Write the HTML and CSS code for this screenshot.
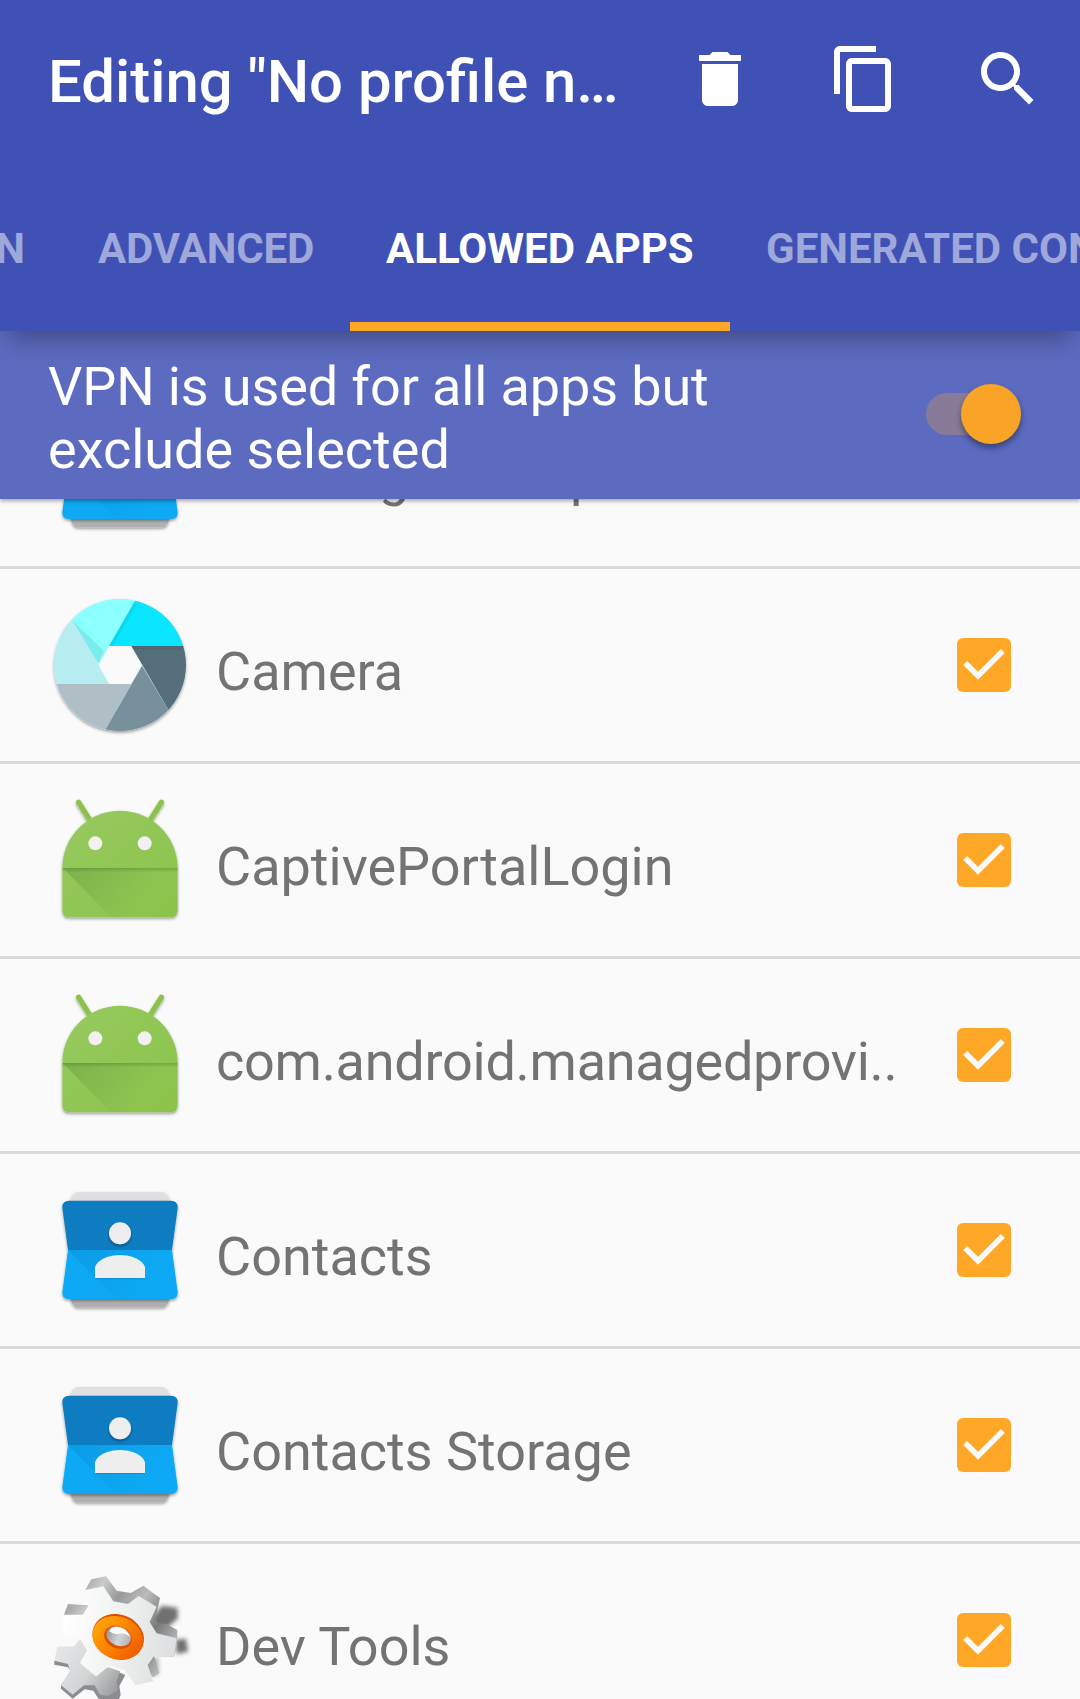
FILE: index.html
```html
<!DOCTYPE html>
<html lang="en">
<head>
<meta charset="utf-8">
<title>Allowed apps</title>
<link rel="stylesheet" href="styles.css">
</head>
<body>
<svg class="defs" width="0" height="0" aria-hidden="true">
  <defs>
    <filter id="shadow" x="-10%" y="-10%" width="120%" height="125%">
      <feDropShadow dx="0" dy="5" stdDeviation="4" flood-color="#000" flood-opacity=".38"/>
    </filter>
    <filter id="soft" x="-50%" y="-50%" width="200%" height="200%"><feGaussianBlur stdDeviation="7"/></filter>
    <filter id="fine" x="-5%" y="-5%" width="110%" height="110%"><feGaussianBlur stdDeviation="1.6"/></filter>
    <linearGradient id="foldGreen" gradientUnits="userSpaceOnUse" x1="90" y1="264" x2="270" y2="410">
      <stop offset="0" stop-color="#33691e" stop-opacity=".22"/><stop offset="1" stop-color="#33691e" stop-opacity="0"/>
    </linearGradient>
    <linearGradient id="foldBlue" gradientUnits="userSpaceOnUse" x1="100" y1="240" x2="310" y2="370">
      <stop offset="0" stop-color="#01579b" stop-opacity=".16"/><stop offset="1" stop-color="#01579b" stop-opacity="0"/>
    </linearGradient>
    <linearGradient id="topShade" x1="0" y1="0" x2="0" y2="1">
      <stop offset="0" stop-color="#1b3a00" stop-opacity=".2"/><stop offset="1" stop-color="#1b3a00" stop-opacity="0"/>
    </linearGradient>
    <linearGradient id="bodyGreen" x1="0" y1="0" x2="1" y2="1">
      <stop offset="0" stop-color="#97ca60"/><stop offset="1" stop-color="#8bc34a"/>
    </linearGradient>
    <linearGradient id="gearFace" gradientUnits="userSpaceOnUse" x1="70" y1="200" x2="410" y2="260">
      <stop offset="0" stop-color="#fff"/><stop offset=".45" stop-color="#f1f2f2"/><stop offset="1" stop-color="#dcdedf"/>
    </linearGradient>
    <linearGradient id="gearEdge" gradientUnits="userSpaceOnUse" x1="80" y1="60" x2="400" y2="260">
      <stop offset="0" stop-color="#85878a"/><stop offset=".26" stop-color="#c9cbcc"/><stop offset=".42" stop-color="#97999b"/><stop offset=".6" stop-color="#b9bbbd"/><stop offset=".8" stop-color="#77797b"/><stop offset="1" stop-color="#b5b7b9"/>
    </linearGradient>
    <linearGradient id="gearSmall" gradientUnits="userSpaceOnUse" x1="60" y1="270" x2="240" y2="400">
      <stop offset="0" stop-color="#e4e5e6"/><stop offset=".5" stop-color="#d2d4d5"/><stop offset="1" stop-color="#939597"/>
    </linearGradient>
    <linearGradient id="ring" x1="0" y1="0" x2="1" y2=".3">
      <stop offset="0" stop-color="#ffab0a"/><stop offset=".5" stop-color="#ff8a00"/><stop offset="1" stop-color="#f26200"/>
    </linearGradient>
    <linearGradient id="hole" gradientUnits="userSpaceOnUse" x1="198" y1="236" x2="272" y2="236">
      <stop offset="0" stop-color="#96989a"/><stop offset=".55" stop-color="#d4d5d6"/><stop offset="1" stop-color="#b0b2b4"/>
    </linearGradient>
    <clipPath id="lens"><circle cx="240" cy="255" r="198"/></clipPath>

    <symbol id="icon-camera" viewBox="24 39 432 432">
      <g filter="url(#shadow)">
        <path fill-rule="evenodd" fill="#b2ebf2" d="M240 57a198 198 0 1 1 0 396a198 198 0 1 1 0-396zM207 198L175 255L207 312H273L306 255L274 198z"/>
      </g>
      <path fill="#fafafa" d="M207 198L175 255L207 312H273L306 255L274 198z"/>
      <g clip-path="url(#lens)">
        <path fill="#b7ecf1" d="M97 121L207 312H30V80z"/>
        <path fill="#8cffff" d="M97 121L60 40H298L175 252z"/>
        <path fill="#006064" fill-opacity=".12" d="M97 121L191 212L175 250z"/>
        <path fill="#0ae6ff" d="M285 62L207 198H450V40H298z"/>
        <path fill="#546e7a" d="M274 198H450V420H403L386 391z"/>
        <path fill="#78909c" d="M306 258L386 391L403 460H188L197 447z"/>
        <path fill="#b0bec5" d="M30 312H274L197 447L190 470H30z"/>
        <path fill="#000" fill-opacity=".06" d="M274 198H430V208H280zM285 62L207 198H219L290 74z"/>
      </g>
    </symbol>

    <symbol id="icon-android" viewBox="24 24 432 432">
      <g filter="url(#shadow)">
        <path d="M116 67L150 121M364 67L330 121" stroke="#8bc34a" stroke-width="16" stroke-linecap="round"/>
        <path fill="url(#bodyGreen)" d="M67 264C67 168 145 92 240 92S413 168 413 264V391Q413 412 392 412H88Q67 412 67 391z"/>
      </g>
      <path fill="url(#foldGreen)" d="M68 264H413V391Q413 412 392 412H214z"/>
      <rect x="67" y="264" width="346" height="14" fill="url(#topShade)"/>
      <circle cx="166" cy="190" r="21" fill="#f1f1f1"/><circle cx="314" cy="190" r="21" fill="#f1f1f1"/>
    </symbol>

    <symbol id="icon-contacts" viewBox="24 24 432 432">
      <g filter="url(#shadow)">
        <path fill="#e0e0e0" d="M92 100V92Q96 66 116 66H364Q384 66 388 92V240H92z"/>
        <path fill="#b0b0b0" d="M92 240H388V384Q384 412 364 412H116Q96 412 92 384z"/>
      </g>
      <g filter="url(#shadow)">
        <path fill="#0b7bc1" d="M84 240L67 113Q66 92 88 92H392Q414 92 413 113L396 240z"/>
        <path fill="#08a9f4" d="M84 240L67 367Q66 387 88 387H392Q414 387 413 367L396 240z"/>
      </g>
      <path fill="url(#foldBlue)" d="M84 240H396L413 367Q414 387 392 387H230z"/>
      <g filter="url(#shadow)"><circle cx="240" cy="190" r="33" fill="#eee"/></g>
      <path fill="#eee" d="M165 324V292C172 268 207 255 240 255S308 268 315 292V324z"/>
      <path fill="#006ba8" fill-opacity=".3" d="M165 324H315V328H169z"/>
    </symbol>

    <symbol id="icon-gears" viewBox="24 24 432 432">
      <g filter="url(#soft)" fill="#3c3c3c" fill-opacity=".72">
        <path d="M335 175L365 137L412 143L414 175L380 205L345 200z"/>
        <path d="M405 240L438 236L444 275L410 282z"/>
        <path d="M322 300L355 292V345L335 345z" fill-opacity=".4"/>
      </g>
      <g filter="url(#fine)">
        <path fill="#8b8d90" d="M43 302V314L84 322L92 332L63 376V386L98 416L134 388L160 392L178 420L180 456H220L242 405L238 378L256 345L210 325z"/>
        <path fill="url(#gearSmall)" d="M52 260L102 259L121 236L142 272L121 306L168 350L206 322L240 334L229 366L234 391L205 408L180 404L164 376L132 376L98 404L63 376L90 332L84 312L43 302z"/>
        <path fill="url(#gearEdge)" d="M136 90L154 58L198 49L230 92L272 99L310 77L360 114L352 150L345 190L378 192L412 210L411 256L402 290L342 288L358 338L340 352L310 330L140 200L72 164L84 132L146 136L155 110z"/>
        <path fill="url(#gearFace)" d="M136 90L190 79L220 124L264 132L296 108L350 140L329 186L350 220L410 235L402 290L342 288L323 315L340 364L286 376L254 330L208 319L168 350L121 310L142 270L118 235L68 220V164L128 164L145 138z"/>
        <g transform="rotate(22 234 232)">
          <ellipse cx="234" cy="230" rx="79" ry="66" fill="#df4c05"/>
          <ellipse cx="234" cy="234" rx="78" ry="64" fill="url(#ring)"/>
          <ellipse cx="234" cy="232" rx="43" ry="33" fill="#db5200"/>
        </g>
        <ellipse cx="236" cy="229" rx="38" ry="28" transform="rotate(22 236 229)" fill="url(#hole)"/>
        <path fill="#fff" d="M208 214Q212 200 232 200Q258 203 270 230Q252 216 236 221Q220 224 208 214z"/>
      </g>
    </symbol>

    <symbol id="check" viewBox="0 0 54 54">
      <rect width="54" height="54" rx="6" fill="#ffa726"/>
      <path d="M8.2 25L21 37.8L45.8 13" fill="none" stroke="#fafafa" stroke-width="5.6"/>
    </symbol>
  </defs>
</svg>

<div class="screen">
  <header class="app-bar">
    <div class="toolbar">
      <h1 class="title">Editing "No profile n…</h1>
      <div class="actions">
        <svg class="action" viewBox="0 0 24 24"><path d="M6 19c0 1.1.9 2 2 2h8c1.1 0 2-.9 2-2V7H6v12zM19 4h-3.5l-1-1h-5l-1 1H5v2h14V4z"/></svg>
        <svg class="action" viewBox="0 0 24 24"><path d="M16 1H4c-1.1 0-2 .9-2 2v14h2V3h12V1zm3 4H8c-1.1 0-2 .9-2 2v14c0 1.1.9 2 2 2h11c1.1 0 2-.9 2-2V7c0-1.1-.9-2-2-2zm0 16H8V7h11v14z"/></svg>
        <svg class="action" viewBox="0 0 24 24"><path d="M15.5 14h-.79l-.28-.27C15.41 12.59 16 11.11 16 9.5 16 5.91 13.09 3 9.5 3S3 5.91 3 9.5 5.91 16 9.5 16c1.61 0 3.09-.59 4.23-1.57l.27.28v.79l5 4.99L20.49 19l-4.99-5zm-6 0C7.01 14 5 11.99 5 9.5S7.01 5 9.5 5 14 7.01 14 9.5 11.99 14 9.5 14z"/></svg>
      </div>
    </div>
    <nav class="tabs">
      <span class="tab tab-cut">N</span>
      <span class="tab tab-advanced">ADVANCED</span>
      <span class="tab tab-active">ALLOWED APPS</span>
      <span class="tab">GENERATED CONFIG</span>
    </nav>
  </header>

  <section class="mode">
    <p class="mode-text"><span class="mode-lead">VPN is used for all apps but</span> exclude selected</p>
    <div class="switch"><span class="thumb"></span></div>
  </section>

  <main class="list-window">
    <ul class="apps">
      <li class="app"><svg class="icon"><use href="#icon-contacts"/></svg><span class="name name-tight">Call Log Backup/Restore</span><svg class="box"><use href="#check"/></svg></li>
      <li class="app"><svg class="icon"><use href="#icon-camera"/></svg><span class="name">Camera</span><svg class="box"><use href="#check"/></svg></li>
      <li class="app"><svg class="icon"><use href="#icon-android"/></svg><span class="name">CaptivePortalLogin</span><svg class="box"><use href="#check"/></svg></li>
      <li class="app"><svg class="icon"><use href="#icon-android"/></svg><span class="name name-long">com.android.managedprovi..</span><svg class="box"><use href="#check"/></svg></li>
      <li class="app"><svg class="icon"><use href="#icon-contacts"/></svg><span class="name">Contacts</span><svg class="box"><use href="#check"/></svg></li>
      <li class="app"><svg class="icon"><use href="#icon-contacts"/></svg><span class="name">Contacts Storage</span><svg class="box"><use href="#check"/></svg></li>
      <li class="app"><svg class="icon"><use href="#icon-gears"/></svg><span class="name">Dev Tools</span><svg class="box"><use href="#check"/></svg></li>
    </ul>
  </main>
</div>
</body>
</html>
```
FILE: styles.css
```css
* { box-sizing: border-box; }
body { margin: 0; background: #fafafa; font-family: Roboto, "Liberation Sans", sans-serif; }
.defs { display: block; height: 0; }
.screen { display: flex; flex-direction: column; width: 1080px; height: 1699px; overflow: hidden; }

.app-bar {
  position: relative; z-index: 3; flex: none; height: 331px;
  display: flex; flex-direction: column;
  background: #3f51b5; color: #fff;
  box-shadow: 0 14px 24px -7px rgba(0, 0, 0, .32);
}
.toolbar { height: 187px; padding: 43px 36px 0 48px; display: flex; justify-content: space-between; }
.title { margin: 3px 0 0; font-size: 59.85px; line-height: 72px; font-weight: 500; white-space: nowrap; }
.actions { display: flex; gap: 72px; }
.action { width: 72px; height: 72px; fill: #fff; }

.tabs { display: flex; height: 144px; overflow: hidden; }
.tab {
  flex: none; padding: 37px 36px 0; font-size: 42px; line-height: 50px; font-weight: 700;
  color: rgba(255, 255, 255, .5); white-space: nowrap;
}
.tab-cut { width: 62px; padding-left: 0; padding-right: 37px; direction: rtl; }
.tab-advanced { width: 288px; letter-spacing: -.12px; }
.tab-active { width: 380px; color: #fff; border-bottom: 9px solid #ffa726; }

.mode {
  position: relative; z-index: 2; flex: none; height: 168px; padding: 0 60px 0 48px;
  display: flex; justify-content: space-between; align-items: center;
  background: #5c6bc0; color: #fff; box-shadow: 0 2px 4px rgba(0, 0, 0, .35);
}
.mode-text { margin: 6px 0 0; width: 720px; font-size: 54px; line-height: 63px; }
.mode-lead { letter-spacing: -.13px; }
.switch {
  width: 90px; height: 42px; margin: -2px 4px 0 0; border-radius: 21px; background: #887b99;
  display: flex; align-items: center; justify-content: flex-end;
}
.thumb {
  flex: none; width: 60px; height: 60px; margin-right: -5px; border-radius: 50%;
  background: #f9a427; box-shadow: 0 4px 6px rgba(0, 0, 0, .4);
}

.list-window { flex: 1; min-height: 0; overflow: hidden; }
.apps { list-style: none; margin: -125px 0 0; padding: 0; }
.app {
  display: flex; align-items: center; height: 195px; padding: 0 69px 0 48px;
  border-bottom: 3px solid #dadada;
}
.icon { flex: none; width: 144px; height: 144px; }
.name { flex: 1; margin: 14px 0 0 24px; font-size: 54px; line-height: 64px; color: #737373; white-space: nowrap; }
.name-tight { letter-spacing: -.15px; }
.name-long { letter-spacing: -.26px; }
.box { flex: none; width: 54px; height: 54px; }
```
